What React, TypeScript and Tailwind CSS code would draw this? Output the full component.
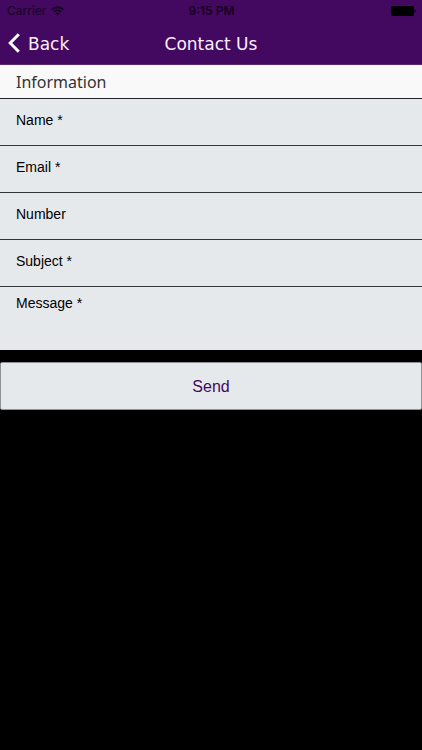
interface Field {
  id: string
  label: string
  type: string
}

const fields: Field[] = [
  { id: 'name', label: 'Name *', type: 'text' },
  { id: 'email', label: 'Email *', type: 'email' },
  { id: 'number', label: 'Number', type: 'tel' },
  { id: 'subject', label: 'Subject *', type: 'text' },
]

function StatusBar() {
  return (
    <div className="grid h-5 grid-cols-3 items-center pt-[2px] pl-[7px] pr-[6px] font-['Inter','Liberation_Sans',sans-serif] text-xs text-[#16031f]">
      <div className="flex items-center gap-[5px]">
        <span>Carrier</span>
        <svg width="13" height="10" viewBox="0 0 13 10" fill="none" stroke="currentColor" aria-hidden="true">
          <path d="M.8 3.6a8.2 8.2 0 0 1 11.4 0" strokeWidth="2" />
          <path d="M2.9 5.9a5.2 5.2 0 0 1 7.2 0" strokeWidth="1.8" />
          <path d="M6.5 9.6 4.4 7.4a2.9 2.9 0 0 1 4.2 0z" fill="currentColor" stroke="none" />
        </svg>
      </div>
      <span className="text-center font-semibold">9:15 PM</span>
      <svg className="justify-self-end" width="25" height="10" viewBox="0 0 25 10" fill="#000" aria-hidden="true">
        <rect width="23" height="10" rx="1.5" />
        <path d="M23.5 3.3c1.6.3 1.6 3.1 0 3.4z" />
      </svg>
    </div>
  )
}

export default function App() {
  return (
    <div className="min-h-screen bg-black font-['Liberation_Sans',Arial,sans-serif]">
      <header className="border-b border-[#5b2a72] bg-[#430860]">
        <StatusBar />
        <div className="grid h-11 grid-cols-[1fr_auto_1fr] items-center px-2 pt-1 font-['DejaVu_Sans',Verdana,sans-serif] text-[17px] text-[#faf0fc]">
          <a href="#back" className="flex items-start gap-2 justify-self-start leading-6">
            <svg width="12" height="20" viewBox="0 0 12 20" fill="none" stroke="#fff" strokeWidth="3" className="mt-px" aria-hidden="true">
              <path d="M10.8 1.2 2.2 10l8.6 8.8" />
            </svg>
            Back
          </a>
          <h1 className="leading-6">Contact Us</h1>
        </div>
      </header>

      <form>
        <h2 className="flex h-[34px] items-center border-b border-[#242428] bg-[#f9f9f9] px-4 font-['Noto_Sans',Verdana,sans-serif] text-base text-[#333]">
          Information
        </h2>

        {fields.map((f) => (
          <div key={f.id} className="flex h-[47px] items-center border-b border-[#35353d] bg-[#e5e9ec] px-4 pb-1">
            <label htmlFor={f.id} className="shrink-0 text-sm text-black">{f.label}</label>
            <input id={f.id} name={f.id} type={f.type} className="ml-2 min-w-0 flex-1 bg-transparent text-sm outline-none" />
          </div>
        ))}

        <div className="flex h-[63px] items-start bg-[#e5e9ec] px-4 pt-[6px]">
          <label htmlFor="message" className="shrink-0 text-sm text-black">Message *</label>
          <textarea id="message" name="message" className="ml-2 h-12 min-w-0 flex-1 resize-none bg-transparent text-sm outline-none" />
        </div>

        <button
          type="button"
          className="mt-3 h-12 w-full rounded-xs border border-[#8f9394] bg-[#e5e9ec] pt-px text-base text-[#430860]"
        >
          Send
        </button>
      </form>
    </div>
  )
}
